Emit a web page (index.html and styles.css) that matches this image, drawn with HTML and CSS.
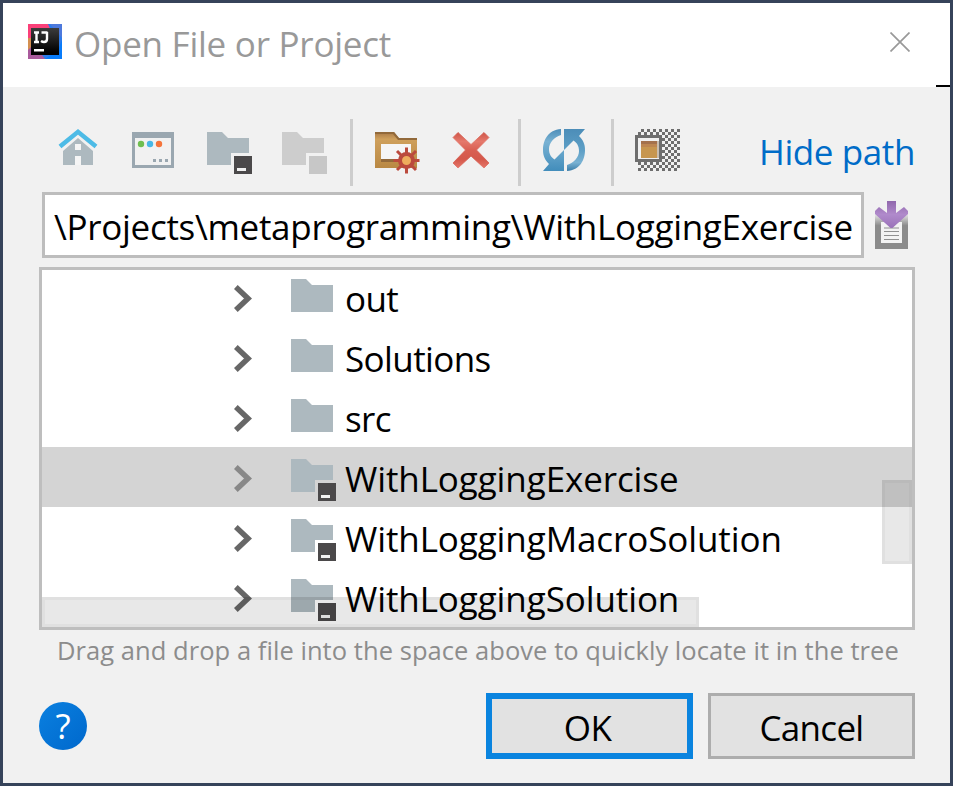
FILE: index.html
```html
<!DOCTYPE html>
<html lang="en">
<head>
<meta charset="utf-8">
<title>Open File or Project</title>
<link rel="stylesheet" href="styles.css">
</head>
<body>
<svg class="defs" aria-hidden="true">
  <defs>
    <linearGradient id="gold" x1="0" y1="0" x2="0" y2="1"><stop offset="0" stop-color="#a87846"/><stop offset=".2" stop-color="#cfa05c"/><stop offset="1" stop-color="#b98843"/></linearGradient>
    <linearGradient id="red" x1="0" y1="0" x2="0" y2="1"><stop offset="0" stop-color="#cf5548"/><stop offset=".25" stop-color="#e5796c"/><stop offset=".5" stop-color="#d95f52"/><stop offset=".75" stop-color="#d4584b"/><stop offset="1" stop-color="#e5766a"/></linearGradient>
    <linearGradient id="blue" x1="0" y1="0" x2="0" y2="1"><stop offset="0" stop-color="#4c8db8"/><stop offset=".3" stop-color="#79b2d3"/><stop offset="1" stop-color="#428dbb"/></linearGradient>
    <linearGradient id="blue2" x1="0" y1="1" x2="0" y2="0"><stop offset="0" stop-color="#4c8db8"/><stop offset=".5" stop-color="#5d9fc6"/><stop offset=".8" stop-color="#79b2d3"/><stop offset="1" stop-color="#397ca8"/></linearGradient>
    <linearGradient id="purple" x1="0" y1="0" x2="0" y2="1"><stop offset="0" stop-color="#9068ac"/><stop offset=".5" stop-color="#b08acb"/><stop offset="1" stop-color="#9a72b9"/></linearGradient>
    <linearGradient id="tray" x1="0" y1="0" x2="0" y2="1"><stop offset="0" stop-color="#8b8b8b" stop-opacity="0"/><stop offset=".35" stop-color="#8b8b8b"/></linearGradient>
    <linearGradient id="logo" x1="0" y1="0" x2="0" y2="1"><stop offset="0" stop-color="#3c3c3c"/><stop offset=".9" stop-color="#000"/></linearGradient>
    <pattern id="check" x="5" y="3" width="6" height="6" patternUnits="userSpaceOnUse"><path d="M3 0h3v3h-3zM0 3h3v3h-3z" fill="#6e6e6e"/></pattern>
    <symbol id="folder" viewBox="0 0 48 48"><path d="M3 6h15l6 6h21v27H3z" fill="#adb9bf"/></symbol>
    <symbol id="module" viewBox="0 0 48 48"><path d="M3 6h15l6 6h21v15H27v12H3z" fill="#adb9bf"/><path d="M30 30h18v18H30z" fill="#4b494a"/><path d="M33 42h9v3h-9z" fill="#f1f1f1"/></symbol>
    <symbol id="chevron" viewBox="0 0 18 27"><path d="M1.800 2L14 13.500L1.800 25" fill="none" stroke="currentColor" stroke-width="5.500"/></symbol>
  </defs>
</svg>
<div class="window">
  <header class="titlebar">
    <svg class="logo" viewBox="0 0 36 36"><path d="M1 0h34v35H1z" fill="#2d7bea"/><path d="M1 0h20l8 18L1 25z" fill="#fb4079"/><path d="M23 0h12v14z" fill="#4d79dc"/><path d="M1 14h6v12l-6 1z" fill="#d59050"/><path d="M1 26l6-6 11 15H1z" fill="#a95a9c"/><path d="M18 35l13-9 4-10v19z" fill="#087cfa"/><path d="M4 4h28v27H4z" fill="url(#logo)"/><path d="M7 8.500h5M9.500 8v10M7 18h5M14.500 8.500h6M20 8v7q0 3-3 3-1.500 0-3-1" fill="none" stroke="#fff" stroke-width="2.400"/><path d="M7 25h10v2.500H7z" fill="#fff"/></svg>
    <h1 class="title">Open File or Project</h1>
    <svg class="close" viewBox="0 0 20 20"><path d="M.5.500l19 19M19.500.500l-19 19" stroke="#999" stroke-width="1.700" fill="none"/></svg>
  </header>
  <main class="content">
    <div class="toolbar">
      <svg class="icon" viewBox="0 0 48 48"><path d="M9 39V25L24 12l15 13v14h-9v-9h-9v9zM21 18v6h6v-6z" fill="#adb9bf" fill-rule="evenodd"/><path d="M21 18h6v6h-6zM21 30h6v9h-6z" fill="#f5f5f5"/><path d="M27 30h3v9h-3z" fill="#adb9bf"/><path d="M6 20.500L24 5.800l18 14.700" fill="none" stroke="#4dbbe6" stroke-width="4.500"/></svg>
      <svg class="icon" viewBox="0 0 48 48"><path d="M3 6h42v36H3zM6 12v27h36V12z" fill="#9aa7b0" fill-rule="evenodd"/><circle cx="12" cy="18" r="3.200" fill="#6fbe50"/><circle cx="21" cy="18" r="3.200" fill="#48b7e5"/><circle cx="30" cy="18" r="3.200" fill="#f5743b"/><path d="M24 33h3v3h-3zM30 33h3v3h-3zM36 33h3v3h-3z" fill="#9aa7b0"/></svg>
      <svg class="icon"><use href="#module"/></svg>
      <svg class="icon" viewBox="0 0 48 48"><path d="M3 6h15l6 6h21v15H27v12H3z" fill="#cdcdcd"/><path d="M30 30h18v18H30z" fill="#c7c7c7"/></svg>
      <i class="sep"></i>
      <svg class="icon" viewBox="0 0 48 48"><path d="M3 6h19l5 6h18v30H3zM9 18v18h30V18z" fill="url(#gold)" fill-rule="evenodd"/><path d="M3 6h19l5 6h18v2H26l-5-6H3zM9 33h20v3H9z" fill="#92693a"/><path d="M9 18h30v15H9z" fill="#f5f5f5"/><g stroke="#bb4a3d" stroke-width="3"><path d="M34.500 21.500v26M21.500 34.500h26M25 25l19 19M44 25L25 44"/></g><circle cx="34.500" cy="34.500" r="6.500" fill="#eead5d" stroke="#bb4a3d" stroke-width="4"/></svg>
      <svg class="icon" viewBox="0 0 48 48"><path d="M11 6.500l13 12 13-12 5 5-12.500 12.500L42 37l-5 5-13-12-13 12-5-5 12.500-13L6 11.500z" fill="url(#red)" stroke="url(#red)" stroke-width=".8"/></svg>
      <i class="sep"></i>
      <svg class="icon" viewBox="0 0 48 48"><path d="M21 3C8 4 3 14 3 24c0 6 2 10 6 14l-6 7h21V24L14.500 33.500C11 31 9 28 9 23c0-6 5-12 12-14z" fill="url(#blue)"/><path transform="rotate(180 24 24)" d="M21 3C8 4 3 14 3 24c0 6 2 10 6 14l-6 7h21V24L14.500 33.500C11 31 9 28 9 23c0-6 5-12 12-14z" fill="url(#blue2)"/></svg>
      <i class="sep"></i>
      <svg class="icon" viewBox="0 0 48 48" shape-rendering="crispEdges"><path d="M5 3h42v42H5z" fill="url(#check)"/><path d="M3.500 10.500h24v24h-24z" fill="#f1f1f1" stroke="#6e6e6e" stroke-width="3"/><path d="M8 15h18v17H8z" fill="#c9bdb0"/><path d="M8 15h16v17H8z" fill="#c7964f"/><path d="M8 15h16v3H8z" fill="#a4714c"/><path d="M8 18h16v3H8z" fill="#bd8651"/></svg>
      <a class="hide">Hide path</a>
    </div>
    <div class="pathrow">
      <div class="path">\Projects\metaprogramming\WithLoggingExercise</div>
      <svg class="history" viewBox="0 0 33 48"><path d="M0 12h33v36H0z" fill="url(#tray)"/><path d="M6 21h21v21H6z" fill="#f3f3f3"/><path d="M9 27h15M9 30.500h15M9 34.500h15M9 38.500h15" stroke="#909090" stroke-width="1.200"/><path d="M12 0h9v12l8-6 4 4v3L17.500 27h-2L0 13v-3l4-4 8 6z" fill="url(#purple)"/></svg>
    </div>
    <div class="tree">
      <ul class="rows">
        <li class="row"><svg class="chev"><use href="#chevron"/></svg><svg class="icon"><use href="#folder"/></svg><span class="name short">out</span></li>
        <li class="row"><svg class="chev"><use href="#chevron"/></svg><svg class="icon"><use href="#folder"/></svg><span class="name short">Solutions</span></li>
        <li class="row"><svg class="chev"><use href="#chevron"/></svg><svg class="icon"><use href="#folder"/></svg><span class="name short">src</span></li>
        <li class="row selected"><svg class="chev"><use href="#chevron"/></svg><svg class="icon"><use href="#module"/></svg><span class="name">WithLoggingExercise</span></li>
        <li class="row"><svg class="chev"><use href="#chevron"/></svg><svg class="icon"><use href="#module"/></svg><span class="name">WithLoggingMacroSolution</span></li>
        <li class="row"><svg class="chev"><use href="#chevron"/></svg><svg class="icon"><use href="#module"/></svg><span class="name">WithLoggingSolution</span></li>
      </ul>
      <div class="scroll vertical"></div>
      <div class="scroll horizontal"></div>
    </div>
    <p class="hint">Drag and drop a file into the space above to quickly locate it in the tree</p>
    <footer class="actions">
      <button class="help">?</button>
      <button class="btn primary">OK</button>
      <button class="btn">Cancel</button>
    </footer>
  </main>
  <i class="edge"></i>
</div>
</body>
</html>
```
FILE: styles.css
```css
* { box-sizing: border-box; }
body { margin: 0; font: 35px/48px "Open Sans", "Noto Sans", sans-serif; color: #000; }
.defs { position: absolute; width: 0; height: 0; }
.window { position: relative; width: 953px; height: 786px; border: 3px solid #36435a; background: #f1f1f1; overflow: hidden; }
.titlebar { display: flex; height: 84px; padding: 21px 40px 0 24px; background: #fff; }
.logo { width: 36px; height: 36px; }
.title { flex: 1; margin: -4px 0 0 11px; font-size: 35px; font-weight: 400; letter-spacing: -.25px; color: #999; white-space: nowrap; }
.close { width: 20px; height: 20px; margin: 8px 0 0; }
.edge { position: absolute; right: 0; top: 82px; width: 14px; height: 2px; background: #000; }
.content { padding: 32px 35px 0 36px; }
.toolbar { display: flex; height: 67px; padding: 0 0 0 15px; }
.icon { width: 48px; height: 48px; flex: none; }
.toolbar .icon { margin-top: 7px; }
.toolbar .icon + .icon { margin-left: 27px; }
.sep { flex: none; width: 3px; height: 67px; margin: 0 19px 0 23px; background: #cdcdcd; }
.hide { margin: 9px 0 0 auto; letter-spacing: -.4px; color: #006cc8; white-space: nowrap; }
.pathrow { display: flex; padding: 6px 0 0 3px; }
.path { width: 822px; height: 66px; padding: 8px 0 0 9px; border: 3px solid #bdbdbd; background: #fff; letter-spacing: -.3px; white-space: nowrap; overflow: hidden; }
.history { width: 33px; height: 48px; margin: 9px 0 0 11px; }
.tree { position: relative; height: 363px; margin-top: 9px; border: 3px solid #bebebe; background: #fff; overflow: hidden; }
.rows { list-style: none; margin: -3px 0 0; padding: 0; }
.row { display: flex; height: 60px; padding: 6px 0 0 192px; white-space: nowrap; }
.row .icon { margin: 0 9px 0 36px; }
.name { margin-top: 2px; letter-spacing: -.1px; }
.short { letter-spacing: -.6px; }
.chev { width: 18px; height: 27px; margin-top: 12px; color: #676767; }
.selected { background: #d4d4d4; }
.selected .chev { color: #888; }
.scroll { position: absolute; background: rgba(0,0,0,.09); border: 3px solid rgba(0,0,0,.03); }
.vertical { right: 0; top: 210px; width: 30px; height: 84px; }
.horizontal { left: 0; bottom: 0; width: 657px; height: 30px; }
.hint { margin: 2px 0 0 18px; font-size: 25.500px; line-height: 36px; letter-spacing: .05px; color: #8c8c8c; white-space: nowrap; }
.actions { display: flex; margin-top: 25px; }
button { padding: 0; font: inherit; color: #000; }
.help { width: 48px; height: 48px; margin: 9px auto 0 0; border: 0; border-radius: 50%; background: linear-gradient(135deg, #0a80e0, #0068cc); color: #fff; line-height: 48px; }
.btn { width: 207px; height: 66px; padding-top: 4px; border: 3px solid #adadad; background: #e2e2e2; letter-spacing: -.7px; flex: none; }
.primary { border: 6px solid #0a84df; margin-right: 15px; padding-right: 4px; }
```
